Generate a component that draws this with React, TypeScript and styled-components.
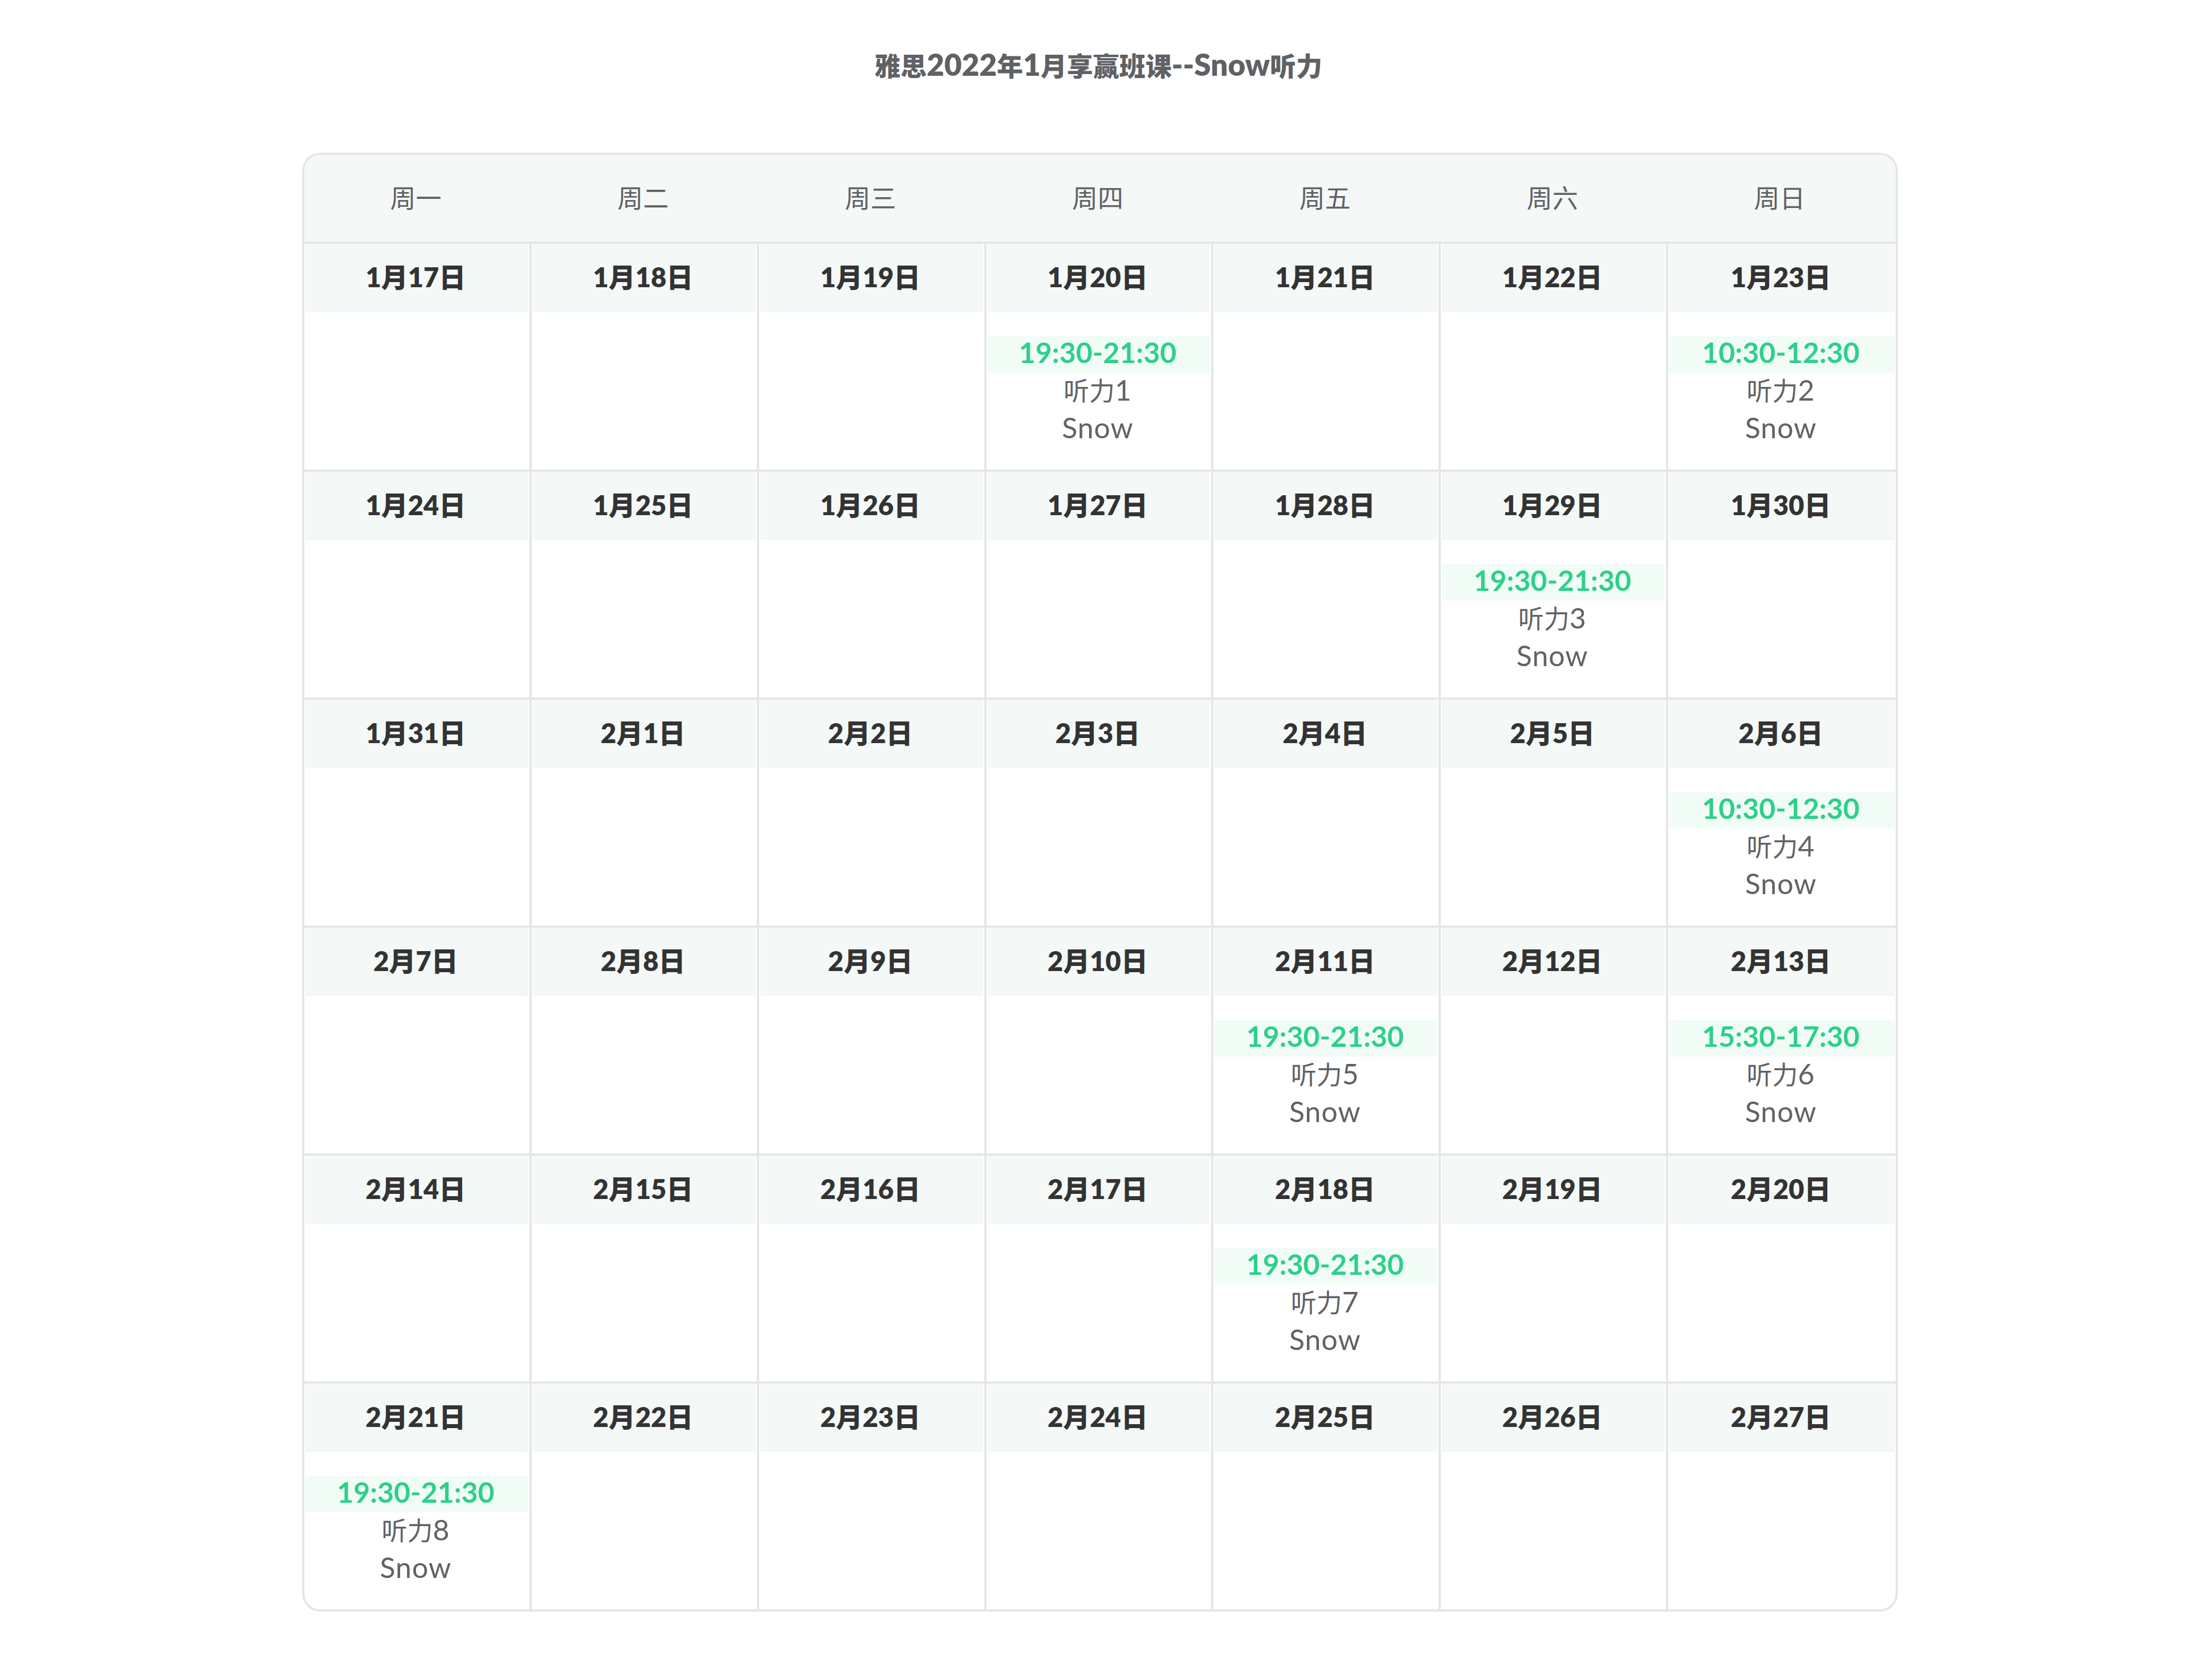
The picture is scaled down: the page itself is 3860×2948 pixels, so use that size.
import React from "react";
import styled, { createGlobalStyle } from "styled-components";

const GlobalStyle = createGlobalStyle`
  html, body {
    margin: 0;
    padding: 0;
    background: #ffffff;
  }
  body {
    font-family: "Lato", "Noto Sans CJK SC", "Noto Sans", sans-serif;
    -webkit-font-smoothing: antialiased;
  }
`;

const CJK = `"Lato", "Noto Sans CJK SC", sans-serif`;

const Page = styled.div`
  display: flex;
  flex-direction: column;
  align-items: center;
  padding: 81px 0 120px;
`;

const Title = styled.h1`
  margin: 0 0 123px;
  padding-right: 6px;
  height: 64px;
  line-height: 64px;
  font-family: ${CJK};
  font-size: 46px;
  font-weight: 800;
  color: #5f6165;
`;

const TitleLatin = styled.span`
  font-size: 53px;
`;

const Calendar = styled.div`
  box-sizing: border-box;
  width: 2800px;
  border: 4px solid #e6e6e6;
  border-radius: 32px;
  overflow: hidden;
  background: #ffffff;
`;

const WeekHeader = styled.div`
  display: grid;
  grid-template-columns: repeat(7, 1fr);
  height: 156px;
  box-sizing: border-box;
  border-bottom: 4px solid #e6e6e6;
  background: #f4f8f7;
`;

const WeekLabel = styled.div`
  display: flex;
  align-items: center;
  justify-content: center;
  padding: 0 8px 5px 0;
  font-family: ${CJK};
  font-size: 45px;
  font-weight: 400;
  color: #606266;
`;

const WeekRow = styled.div<{ $last?: boolean }>`
  display: grid;
  grid-template-columns: repeat(7, 1fr);
  height: ${(p) => (p.$last ? 396 : 400)}px;
  box-sizing: border-box;
  border-bottom: ${(p) => (p.$last ? "none" : "4px solid #e6e6e6")};
`;

const DayCell = styled.div<{ $last?: boolean }>`
  display: flex;
  flex-direction: column;
  box-sizing: border-box;
  min-width: 0;
  border-right: ${(p) => (p.$last ? "none" : "4px solid #e6e6e6")};
`;

const DateBar = styled.div`
  box-sizing: border-box;
  height: 120px;
  margin: 0 2px;
  padding: 0 4px 9px 0;
  display: flex;
  align-items: center;
  justify-content: center;
  background: #f4f8f7;
  font-family: ${CJK};
  font-size: 47px;
  font-weight: 800;
  color: #333333;
`;

const DayBody = styled.div`
  flex: 1;
  display: flex;
  flex-direction: column;
  justify-content: center;
  padding: 0 2px;
`;

const TimeBar = styled.div`
  box-sizing: border-box;
  height: 64px;
  line-height: 56px;
  padding-right: 4px;
  text-align: center;
  background: #f2fcf7;
  font-family: "Lato", sans-serif;
  font-size: 50px;
  font-weight: 700;
  color: #2dd08a;
`;

const TextLine = styled.div<{ $lift?: number }>`
  height: 64px;
  line-height: ${(p) => 64 - (p.$lift ?? 0) * 2}px;
  padding-right: 4px;
  text-align: center;
  font-family: ${CJK};
  font-size: 45px;
  font-weight: 400;
  color: #606266;
`;

const LatinPart = styled.span`
  font-family: "Lato", sans-serif;
  font-size: 50px;
  letter-spacing: 1px;
`;

type Session = { time: string; lesson: number; teacher: string };

const sessions: Record<string, Session> = {
  "1-20": { time: "19:30-21:30", lesson: 1, teacher: "Snow" },
  "1-23": { time: "10:30-12:30", lesson: 2, teacher: "Snow" },
  "1-29": { time: "19:30-21:30", lesson: 3, teacher: "Snow" },
  "2-6": { time: "10:30-12:30", lesson: 4, teacher: "Snow" },
  "2-11": { time: "19:30-21:30", lesson: 5, teacher: "Snow" },
  "2-13": { time: "15:30-17:30", lesson: 6, teacher: "Snow" },
  "2-18": { time: "19:30-21:30", lesson: 7, teacher: "Snow" },
  "2-21": { time: "19:30-21:30", lesson: 8, teacher: "Snow" },
};

const weekdays = ["周一", "周二", "周三", "周四", "周五", "周六", "周日"];

type Day = { month: number; day: number };

function buildWeeks(): Day[][] {
  const weeks: Day[][] = [];
  const start = new Date(2022, 0, 17);
  for (let w = 0; w < 6; w++) {
    const week: Day[] = [];
    for (let d = 0; d < 7; d++) {
      const dt = new Date(start);
      dt.setDate(start.getDate() + w * 7 + d);
      week.push({ month: dt.getMonth() + 1, day: dt.getDate() });
    }
    weeks.push(week);
  }
  return weeks;
}

const weeks = buildWeeks();

export default function App() {
  return (
    <>
      <GlobalStyle />
      <Page>
        <Title>
          雅思<TitleLatin>2022</TitleLatin>年<TitleLatin>1</TitleLatin>月享赢班课
          <TitleLatin>--Snow</TitleLatin>听力
        </Title>
        <Calendar>
          <WeekHeader>
            {weekdays.map((w) => (
              <WeekLabel key={w}>{w}</WeekLabel>
            ))}
          </WeekHeader>
          {weeks.map((week, wi) => (
            <WeekRow key={wi} $last={wi === weeks.length - 1}>
              {week.map((d, di) => {
                const s = sessions[`${d.month}-${d.day}`];
                return (
                  <DayCell key={di} $last={di === 6}>
                    <DateBar>
                      {d.month}月{d.day}日
                    </DateBar>
                    <DayBody>
                      {s && (
                        <>
                          <TimeBar>{s.time}</TimeBar>
                          <TextLine $lift={2}>
                            听力<LatinPart>{s.lesson}</LatinPart>
                          </TextLine>
                          <TextLine>
                            <LatinPart>{s.teacher}</LatinPart>
                          </TextLine>
                        </>
                      )}
                    </DayBody>
                  </DayCell>
                );
              })}
            </WeekRow>
          ))}
        </Calendar>
      </Page>
    </>
  );
}
